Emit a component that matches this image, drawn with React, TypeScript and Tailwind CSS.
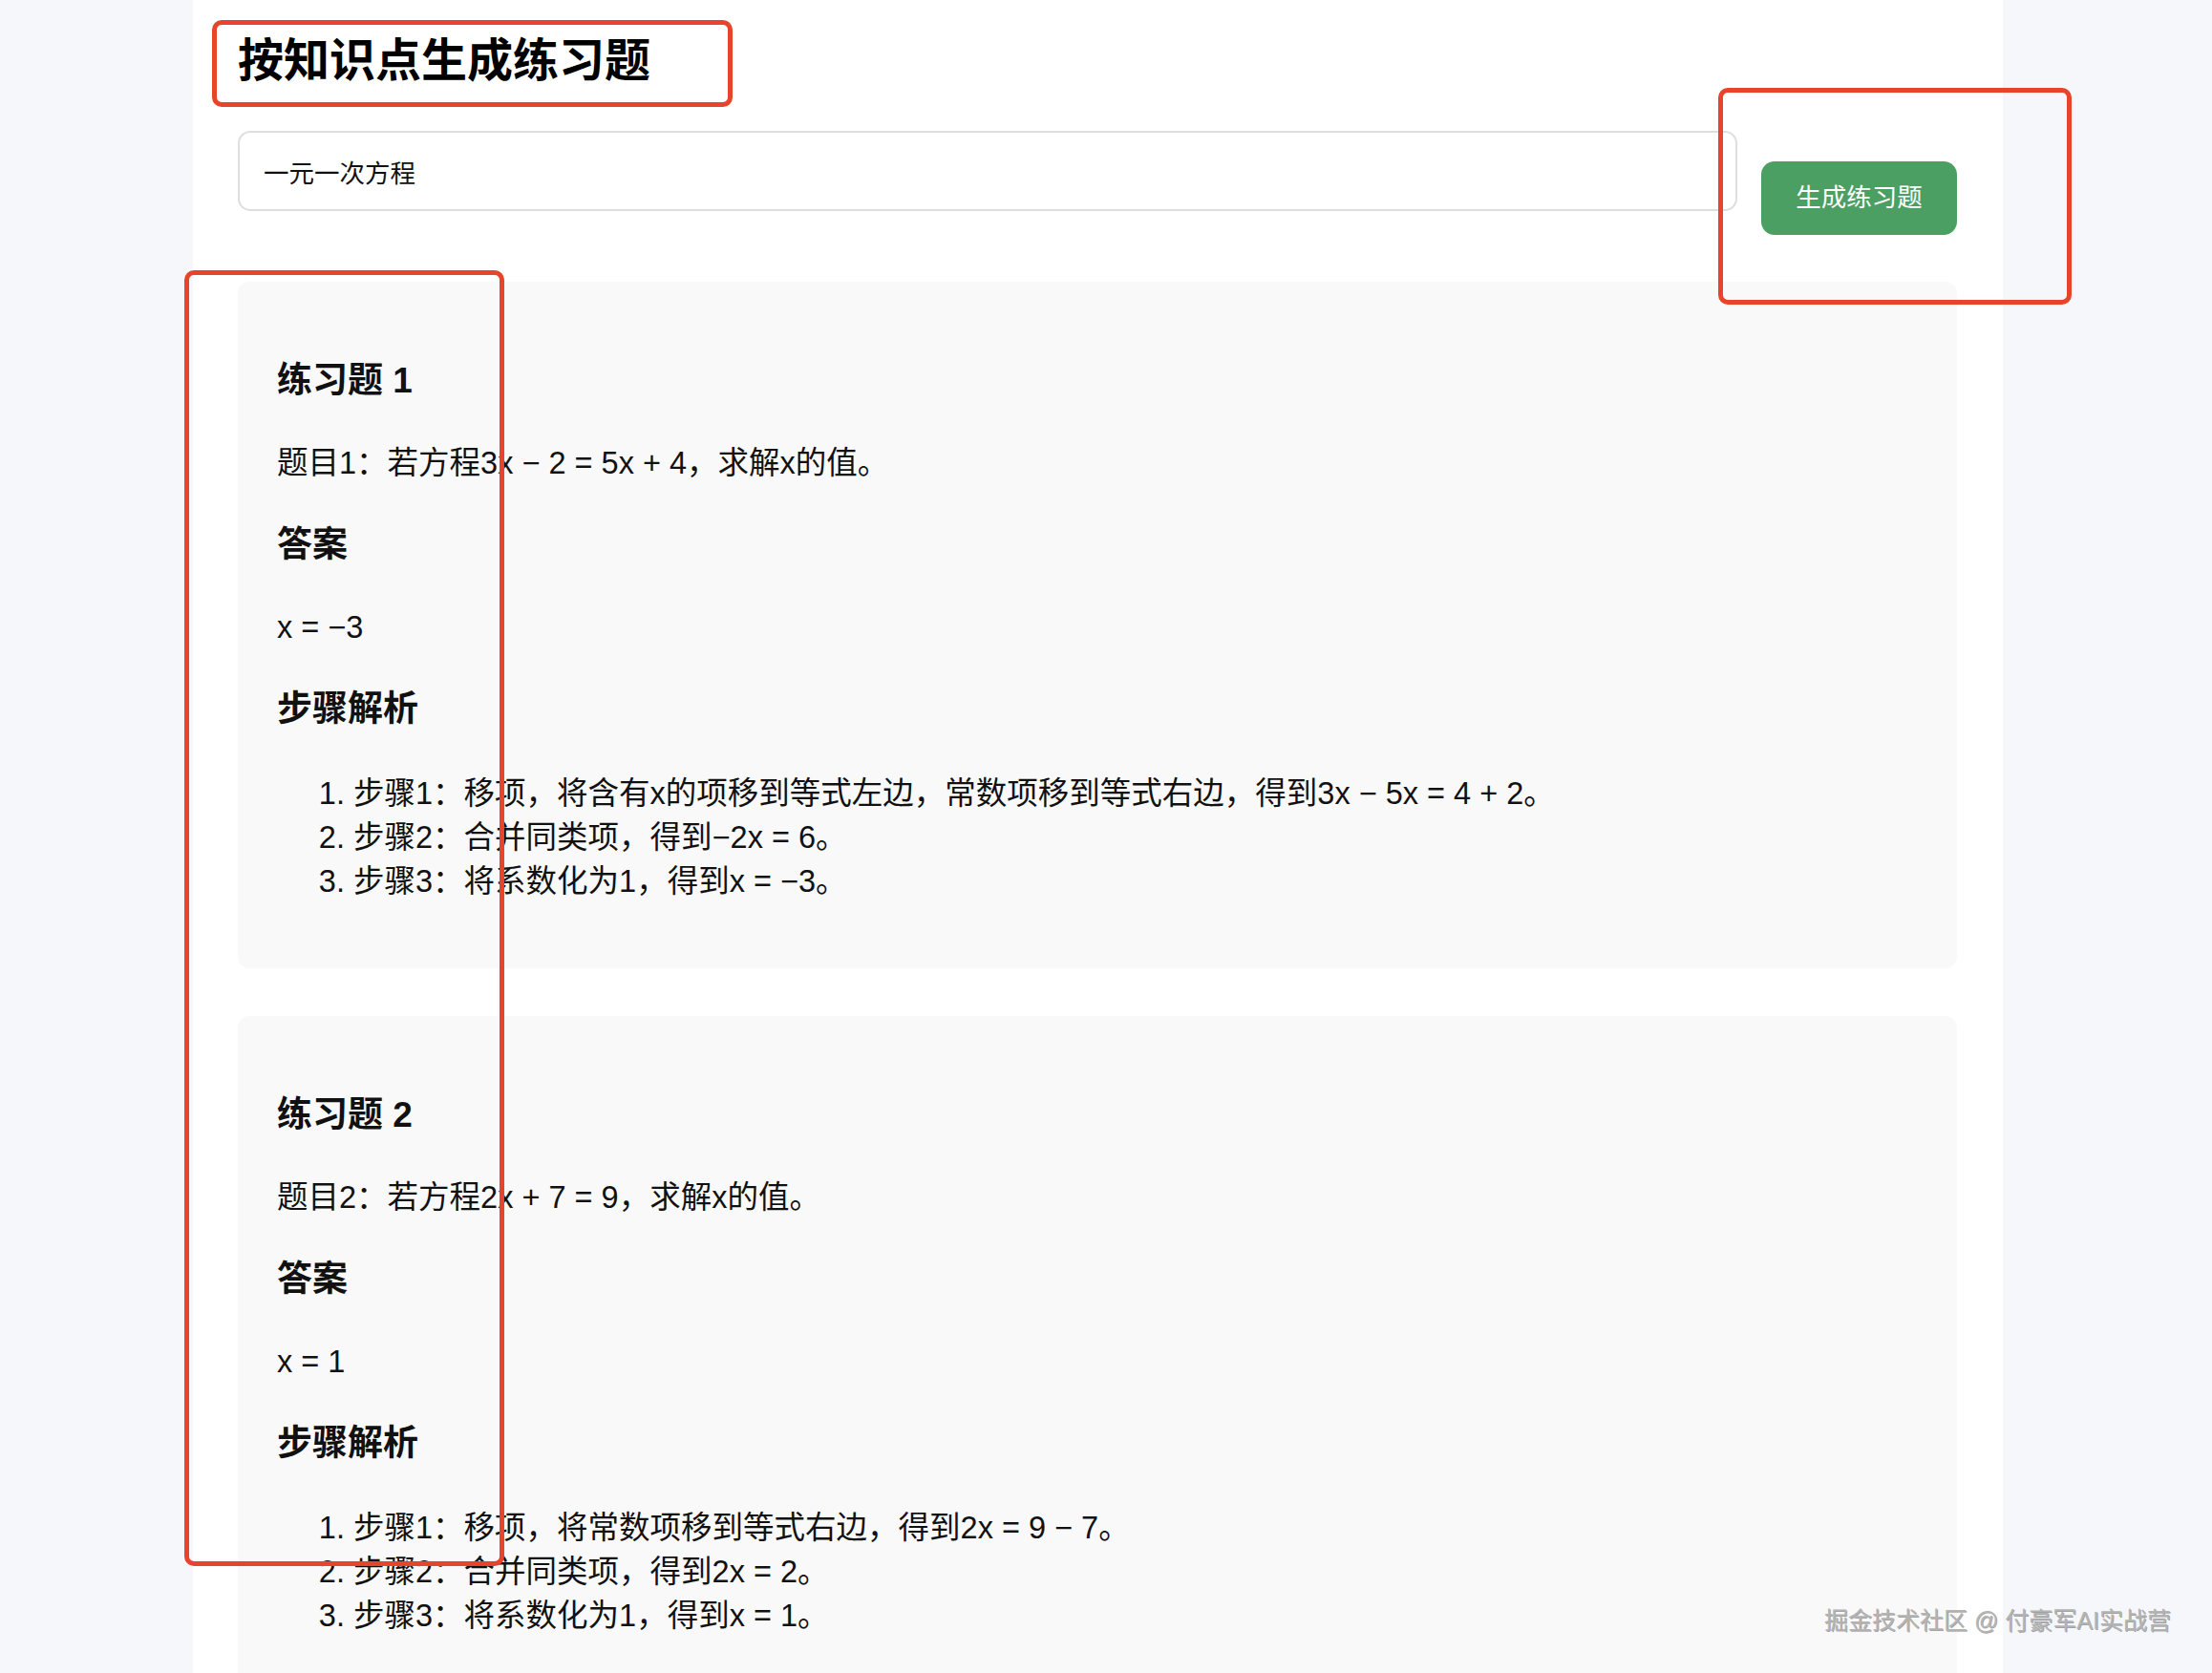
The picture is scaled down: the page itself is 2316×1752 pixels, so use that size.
import React from "react";

type Exercise = {
  title: string;
  question: string;
  answer: string;
  steps: string[];
};

const exercises: Exercise[] = [
  {
    title: "练习题 1",
    question: "题目1：若方程3x − 2 = 5x + 4，求解x的值。",
    answer: "x = −3",
    steps: [
      "步骤1：移项，将含有x的项移到等式左边，常数项移到等式右边，得到3x − 5x = 4 + 2。",
      "步骤2：合并同类项，得到−2x = 6。",
      "步骤3：将系数化为1，得到x = −3。",
    ],
  },
  {
    title: "练习题 2",
    question: "题目2：若方程2x + 7 = 9，求解x的值。",
    answer: "x = 1",
    steps: [
      "步骤1：移项，将常数项移到等式右边，得到2x = 9 − 7。",
      "步骤2：合并同类项，得到2x = 2。",
      "步骤3：将系数化为1，得到x = 1。",
    ],
  },
];

function ExerciseCard({ item }: { item: Exercise }) {
  return (
    <section className="flex flex-col gap-[41px] rounded-[12px] bg-[#f9f9f9] px-[41px] pt-[82px] pb-[68px]">
      <h3 className="text-[37px] leading-[44px] font-bold">{item.title}</h3>
      <p className="text-[32.5px] leading-[46px]">{item.question}</p>
      <h3 className="text-[37px] leading-[44px] font-bold">答案</h3>
      <p className="text-[32.5px] leading-[46px]">{item.answer}</p>
      <h3 className="text-[37px] leading-[44px] font-bold">步骤解析</h3>
      <ol className="mt-[2px] list-decimal pl-[80px] text-[32.5px] leading-[46px]">
        {item.steps.map((s, i) => (
          <li key={i}>{s}</li>
        ))}
      </ol>
    </section>
  );
}

export default function App() {
  return (
    <div className="relative h-[1752px] overflow-hidden bg-[#f5f7fa] font-['Liberation_Sans','Noto_Sans_CJK_SC',sans-serif] text-[#111]">
      <main className="ml-[202px] flex min-h-full w-[1895px] flex-col bg-white pt-[35px] pr-[48px] pl-[47px]">
        <h1 className="text-[48px] leading-[58px] font-bold text-black">按知识点生成练习题</h1>

        <div className="mt-[44px] flex items-start gap-[25px]">
          <input
            defaultValue="一元一次方程"
            className="h-[84px] min-w-0 flex-1 rounded-[13px] border-2 border-[#dedede] bg-white px-[25px] text-[26.5px] outline-none"
          />
          <button
            type="button"
            className="mt-[32px] h-[77px] w-[205px] shrink-0 rounded-[14px] bg-[#4c9f62] text-[26.5px] text-white"
          >
            生成练习题
          </button>
        </div>

        <div className="mt-[49px] flex flex-col gap-[50px]">
          {exercises.map((ex) => (
            <ExerciseCard key={ex.title} item={ex} />
          ))}
        </div>
      </main>

      {/* annotation boxes drawn over the screenshot */}
      <div className="pointer-events-none absolute top-[21px] left-[222px] h-[91px] w-[545px] rounded-[10px] border-[5px] border-[#e8442c]" />
      <div className="pointer-events-none absolute top-[92px] left-[1799px] h-[227px] w-[370px] rounded-[10px] border-[5px] border-[#e8442c]" />
      <div className="pointer-events-none absolute top-[283px] left-[193px] h-[1357px] w-[335px] rounded-[10px] border-[5px] border-[#e8442c]" />

      <div className="absolute top-[1683px] right-[43px] text-[25px] leading-[28px] text-[#b4b4b4] [text-shadow:1px_1px_0_rgba(0,0,0,0.35)]">
        掘金技术社区 @ 付豪军AI实战营
      </div>
    </div>
  );
}
